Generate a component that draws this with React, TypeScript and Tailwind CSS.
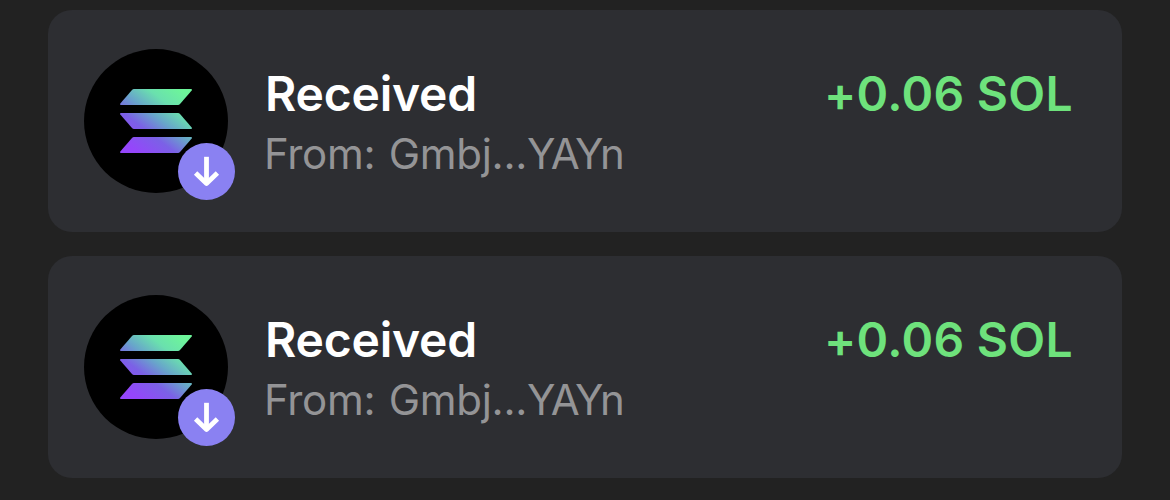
const transactions = [
  { id: 1, title: "Received", from: ["Gmbj", "YAYn"], amount: "+0.06 SOL" },
  { id: 2, title: "Received", from: ["Gmbj", "YAYn"], amount: "+0.06 SOL" },
];

function SolanaLogo({ id }: { id: string }) {
  return (
    <svg width="72" height="64" viewBox="0 0 72 64" fill={`url(#${id})`}>
      <defs>
        <linearGradient id={id} gradientUnits="userSpaceOnUse" x1="62" y1="2" x2="16" y2="62">
          <stop offset="0" stopColor="#6df59a" />
          <stop offset="0.25" stopColor="#6ae0ae" />
          <stop offset="0.48" stopColor="#68a6ca" />
          <stop offset="0.7" stopColor="#7b61e6" />
          <stop offset="1" stopColor="#9546fb" />
        </linearGradient>
      </defs>
      <path d="M12 .9Q12.8 0 14 0H71.2Q72.3.3 71.7 1.4L60 15.1Q59.2 16 58 16H.8Q-.3 15.7.3 14.6Z" />
      <path d="M12 39.1Q12.8 40 14 40H71.2Q72.3 39.7 71.7 38.6L60 24.9Q59.2 24 58 24H.8Q-.3 24.3.3 25.4Z" />
      <path d="M12 48.9Q12.8 48 14 48H71.2Q72.3 48.3 71.7 49.4L60 63.1Q59.2 64 58 64H.8Q-.3 63.7.3 62.6Z" />
    </svg>
  );
}

function ArrowDown() {
  return (
    <svg width="57" height="57" viewBox="0 0 57 57" fill="none" stroke="#fff" strokeWidth="4.8">
      <path d="M28.5 13.8V40" />
      <path d="M17.6 30L28.5 40.4L39.4 30" strokeLinejoin="round" />
    </svg>
  );
}

export default function App() {
  return (
    <div className="h-[500px] w-[1170px] overflow-hidden bg-[#222222] px-12 pt-2.5 font-['Inter',sans-serif]">
      <div className="flex flex-col gap-6">
        {transactions.map((tx) => (
          <div key={tx.id} className="flex h-[222px] rounded-3xl bg-[#2d2e32] pl-9 pr-[49px]">
            <div className="relative mt-[39px] flex h-36 w-36 shrink-0 items-center justify-center rounded-full bg-black">
              <SolanaLogo id={`sol-${tx.id}`} />
              <div className="absolute -bottom-[7px] -right-[7px] h-[57px] w-[57px] rounded-full bg-[#8a81f2]">
                <ArrowDown />
              </div>
            </div>
            <div className="ml-9 mt-[54px] flex-1">
              <div className="h-[60px] pl-px text-[48px] font-semibold leading-[60px] tracking-[-0.2px] text-white">{tx.title}</div>
              <div className="h-[60px] text-[42px] leading-[60px] tracking-[-0.3px] text-[#949496] [word-spacing:2px]">
                From: {tx.from[0]}...
                <span className="tracking-[-1.7px]">{tx.from[1]}</span>
              </div>
            </div>
            <div className="mt-[54px] text-[48px] font-semibold leading-[60px] tracking-[0.3px] text-[#6ee27c]">{tx.amount}</div>
          </div>
        ))}
      </div>
    </div>
  );
}
